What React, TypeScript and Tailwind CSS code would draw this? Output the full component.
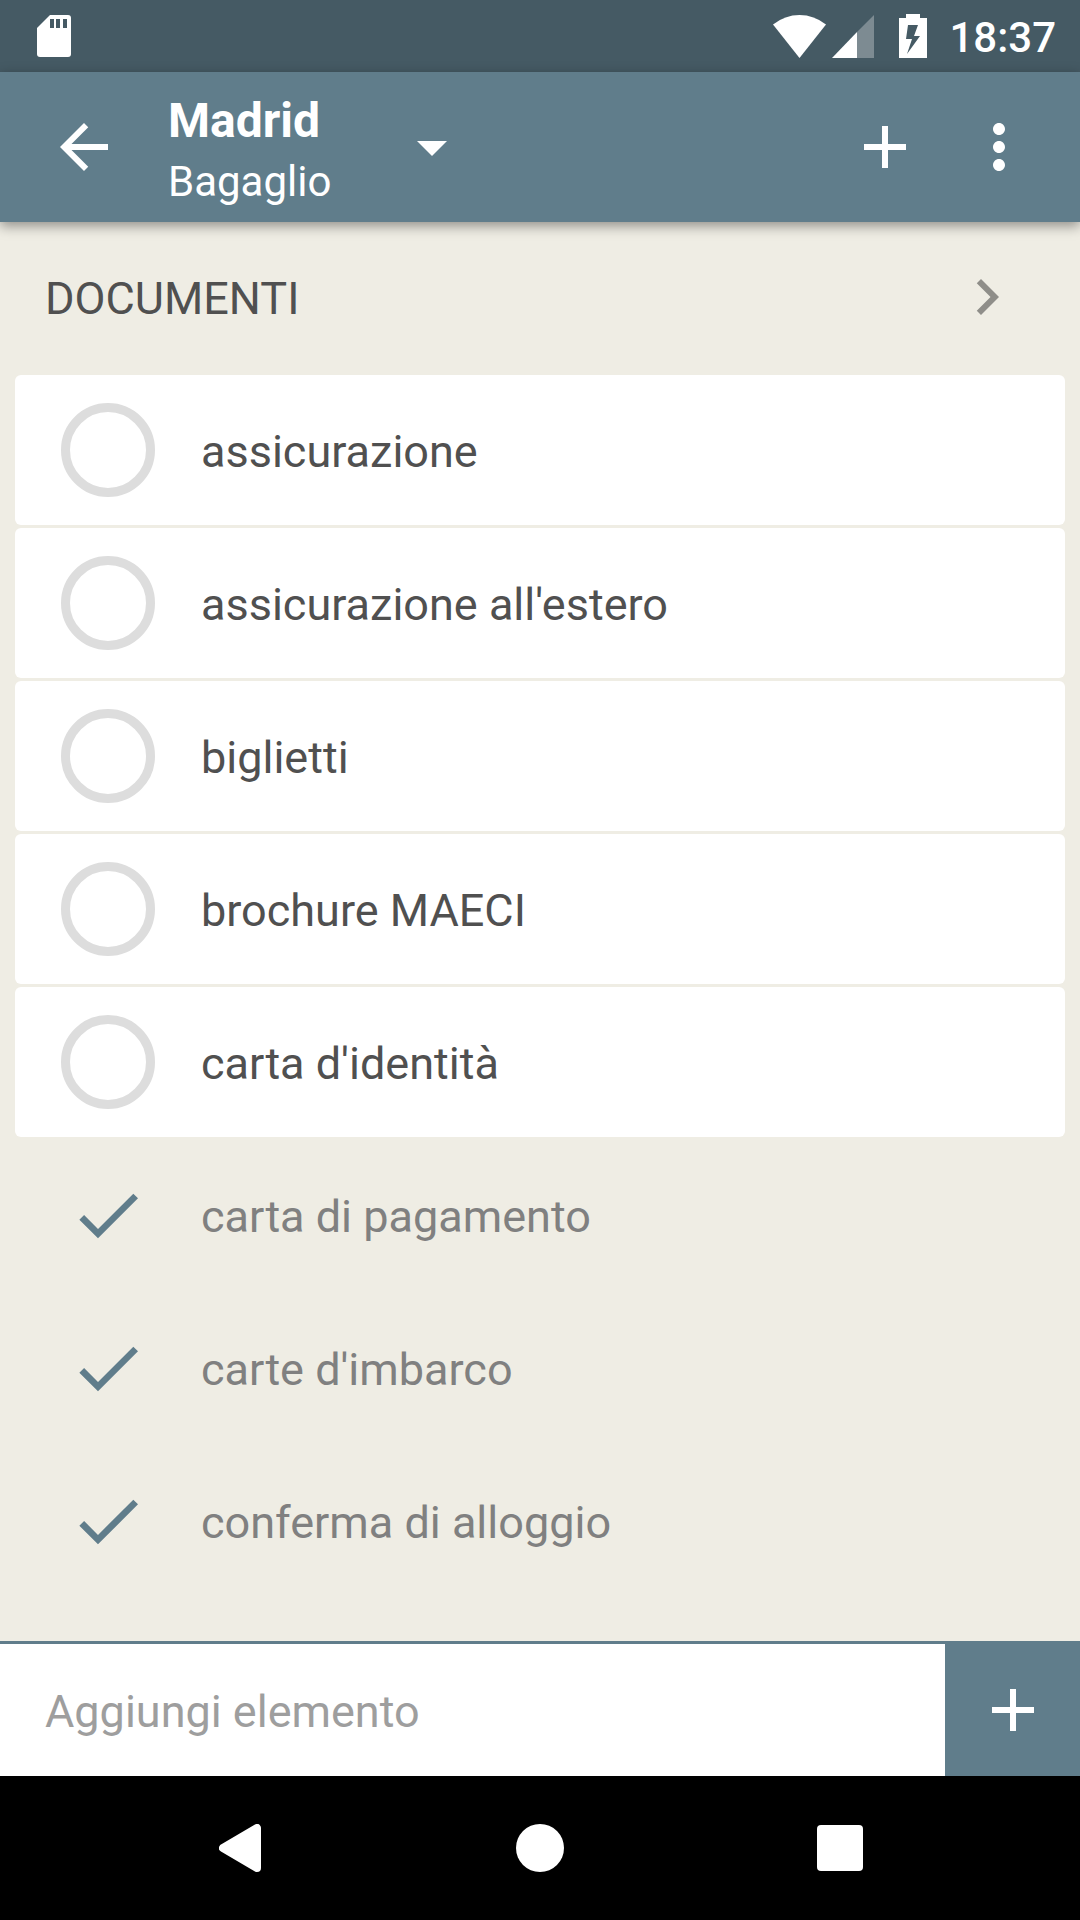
import { useState } from "react";

type Item = { name: string; packed: boolean };

const initialItems: Item[] = [
    { name: "assicurazione", packed: false },
    { name: "assicurazione all'estero", packed: false },
    { name: "biglietti", packed: false },
    { name: "brochure MAECI", packed: false },
    { name: "carta d'identità", packed: false },
    { name: "carta di pagamento", packed: true },
    { name: "carte d'imbarco", packed: true },
    { name: "conferma di alloggio", packed: true },
];

const Icon = ({ path, className = "size-[72px]" }: { path: string; className?: string }) => (
    <svg viewBox="0 0 24 24" fill="currentColor" aria-hidden="true" className={className}>
        <path d={path} />
    </svg>
);

const ADD = "M19 13h-6v6h-2v-6H5v-2h6V5h2v6h6v2z";
const BACK = "M20 11H7.83l5.59-5.59L12 4l-8 8 8 8 1.41-1.41L7.83 13H20v-2z";
const MORE = "M12 8c1.1 0 2-.9 2-2s-.9-2-2-2-2 .9-2 2 .9 2 2 2zm0 2c-1.1 0-2 .9-2 2s.9 2 2 2 2-.9 2-2-.9-2-2-2zm0 6c-1.1 0-2 .9-2 2s.9 2 2 2 2-.9 2-2-.9-2-2-2z";
const CHEVRON = "M10 6L8.59 7.41 13.17 12l-4.58 4.59L10 18l6-6z";
const CHECK = "M9 16.17L4.83 12l-1.42 1.41L9 19 21 7l-1.41-1.41z";

const StatusBar = () => (
    <div className="flex h-[72px] shrink-0 items-center bg-[#455a64] pl-[37px] pr-6 text-white">
        <svg viewBox="0 0 34 42" className="h-[42px] w-[34px]" aria-hidden="true">
            <path fill="currentColor" d="M13 0h18a3 3 0 0 1 3 3v36a3 3 0 0 1-3 3H3a3 3 0 0 1-3-3V13z" />
            <path fill="#455a64" d="M13 4h4v9h-4zM19 4h4v9h-4zM26 4h4v9h-4z" />
        </svg>
        <div className="ml-auto flex items-center">
            <svg viewBox="0 0 53 43" className="h-[43px] w-[53px]" aria-hidden="true">
                <path fill="currentColor" d="M0 9.500Q12 0 26.500 0T53 9.500L26.500 43z" />
            </svg>
            <svg viewBox="0 0 42 43" className="ml-1.5 h-[43px] w-[42px]" aria-hidden="true">
                <path fill="currentColor" fillOpacity="0.3" d="M42 0v43H25V17z" />
                <path fill="currentColor" d="M25 17v26H0z" />
            </svg>
            <svg viewBox="0 0 28 44" className="ml-[25px] h-11 w-7" aria-hidden="true">
                <path fill="currentColor" fillRule="evenodd" d="M7 0h14v4h7v40H0V4h7zM9 11L7 25h6L8 40l13-18h-6l4-11z" />
            </svg>
            <span className="ml-[22px] pt-[3px] text-[42px] font-medium leading-[60px]">18:37</span>
        </div>
    </div>
);

const Toolbar = () => (
    <header className="relative z-10 flex h-[150px] shrink-0 items-center bg-[#607d8b] pl-12 pr-[45px] text-white shadow-[0_4px_12px_rgba(0,0,0,0.4)]">
        <button type="button" aria-label="Indietro">
            <Icon path={BACK} />
        </button>
        <button type="button" className="ml-12 flex items-center text-left">
            <span className="flex w-[228px] flex-col gap-px pt-2">
                <span className="text-[48px] font-bold leading-[60px]">Madrid</span>
                <span className="text-[42px] leading-[60px]">Bagaglio</span>
            </span>
            <Icon path="M7 10l5 5 5-5z" />
        </button>
        <div className="ml-auto flex items-center gap-[42px]">
            <button type="button" aria-label="Aggiungi">
                <Icon path={ADD} />
            </button>
            <button type="button" aria-label="Altre opzioni">
                <Icon path={MORE} />
            </button>
        </div>
    </header>
);

const ListItem = ({ item, onToggle }: { item: Item; onToggle: () => void }) => (
    <li>
        <label className={`flex h-[150px] items-center rounded-md pl-[46px] ${item.packed ? "text-[#808080]" : "bg-white text-[#505050]"}`}>
            <span className="grid size-[94px] place-items-center text-[#607d8b]">
                <input
                    type="checkbox"
                    checked={item.packed}
                    onChange={onToggle}
                    className="col-start-1 row-start-1 size-[94px] appearance-none rounded-full border-[9px] border-[#dddddd] checked:border-transparent"
                />
                {item.packed && <Icon path={CHECK} className="pointer-events-none col-start-1 row-start-1 size-20" />}
            </span>
            <span className="ml-[46px] pt-[3px] text-[45px] leading-[60px]">{item.name}</span>
        </label>
    </li>
);

const App = () => {
    const [items, setItems] = useState<Item[]>(initialItems);
    const [newItem, setNewItem] = useState("");

    const toggleItem = (index: number) => {
        setItems(items.map((item, i) => (i === index ? { ...item, packed: !item.packed } : item)));
    };

    const addItem = () => {
        if (!newItem.trim()) return;
        setItems([...items, { name: newItem.trim(), packed: false }]);
        setNewItem("");
    };

    return (
        <div className="flex h-screen flex-col bg-[#efede4] font-[Roboto,sans-serif]">
            <StatusBar />
            <Toolbar />
            <main className="min-h-0 flex-1 overflow-y-auto px-[15px]">
                <button type="button" className="flex h-[150px] w-full items-center justify-between pl-[30px] pr-[42px]">
                    <span className="pt-[3px] text-[45px] leading-[60px] text-[#505050]">DOCUMENTI</span>
                    <Icon path={CHEVRON} className="size-[72px] text-[#8f8e89]" />
                </button>
                <ul className="mt-[3px] flex flex-col gap-[3px]">
                    {items.map((item, index) => (
                        <ListItem key={index} item={item} onToggle={() => toggleItem(index)} />
                    ))}
                </ul>
            </main>
            <form
                className="flex h-[135px] shrink-0 border-t-[3px] border-[#607d8b] bg-[#607d8b]"
                onSubmit={(e) => {
                    e.preventDefault();
                    addItem();
                }}
            >
                <input
                    type="text"
                    aria-label="Aggiungi elemento"
                    placeholder="Aggiungi elemento"
                    value={newItem}
                    onChange={(e) => setNewItem(e.target.value)}
                    className="min-w-0 flex-1 bg-white px-[45px] pt-[3px] text-[45px] text-[#505050] outline-none placeholder:text-[#9e9e9e]"
                />
                <button type="submit" aria-label="Aggiungi elemento" className="flex w-[135px] items-center justify-center text-white">
                    <Icon path={ADD} />
                </button>
            </form>
            <nav className="grid h-36 shrink-0 grid-cols-3 bg-black px-[90px] text-white">
                <button type="button" aria-label="Indietro" className="flex items-center justify-center">
                    <svg viewBox="0 0 42 48" className="h-12 w-[42px]" aria-hidden="true">
                        <path fill="currentColor" stroke="currentColor" strokeWidth="8" strokeLinejoin="round" d="M38 4v40L4 24z" />
                    </svg>
                </button>
                <button type="button" aria-label="Home" className="flex items-center justify-center">
                    <span className="size-12 rounded-full bg-white" />
                </button>
                <button type="button" aria-label="Recenti" className="flex items-center justify-center">
                    <span className="size-[46px] rounded bg-white" />
                </button>
            </nav>
        </div>
    );
};

export default App;
